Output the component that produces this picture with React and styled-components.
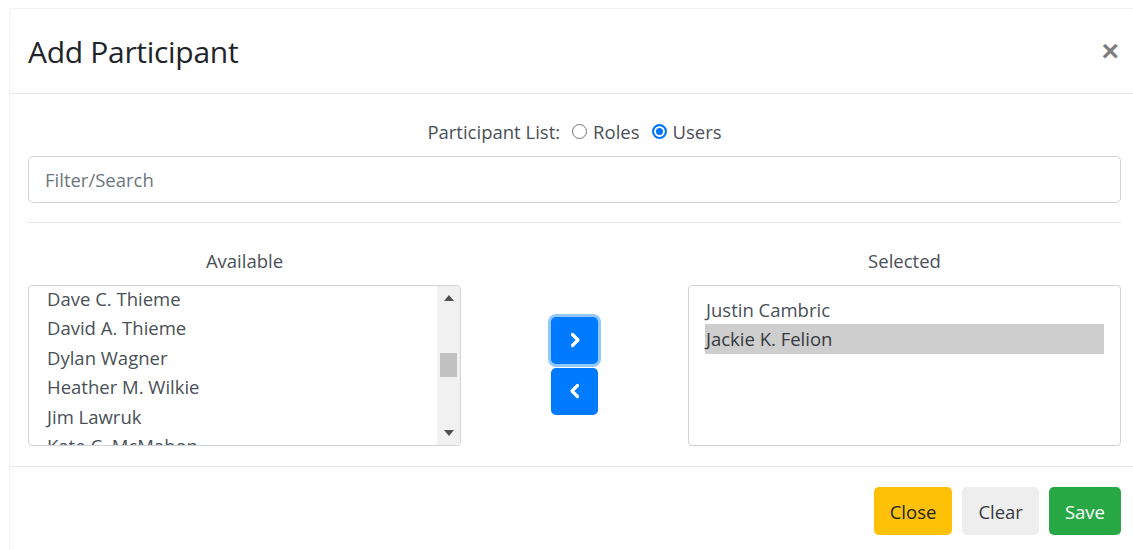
import React, { useState } from "react";
import styled, { createGlobalStyle } from "styled-components";

const GlobalStyle = createGlobalStyle`
    html, body {
        margin: 0;
        background: #fff;
        overflow: hidden;
    }
    body {
        font-family: "Open Sans", "Noto Sans", sans-serif;
        color: #495057;
    }
`

const Page = styled.div`
    padding: 8px 0 0 9px;
`
const Modal = styled.div`
    width: 1129px;
    border-left: 1px solid #f2f2f2;
    border-top: 1px solid #f2f2f2;
    border-top-left-radius: 4px;
    background: #fff;
`
const Header = styled.div`
    display: flex;
    align-items: center;
    justify-content: space-between;
    height: 84px;
    padding: 0 18px;
    border-bottom: 1px solid #e9ecef;
`
const Title = styled.h4`
    margin: 0;
    font-size: 30px;
    font-weight: 500;
    color: #212529;
    letter-spacing: -0.3px;
`
const CloseX = styled.button`
    border: 0;
    background: none;
    padding: 0;
    margin-right: 2px;
    font-family: "Liberation Sans", sans-serif;
    font-size: 30px;
    font-weight: 700;
    line-height: 1;
    color: #000;
    opacity: 0.5;
    cursor: pointer;
`
const Body = styled.div`
    padding: 24px 18px 20px;
`
const ListType = styled.div`
    display: flex;
    justify-content: center;
    align-items: center;
    gap: 6px;
    height: 26px;
    font-size: 18.5px;
    color: #495057;
`
const Option = styled.label`
    display: flex;
    align-items: center;
    gap: 6px;
    margin-left: 6px;
    cursor: pointer;
`
const Radio = styled.span`
    box-sizing: border-box;
    width: 15px;
    height: 15px;
    border-radius: 50%;
    border: ${p => p.$on ? "2px solid #0075ff" : "1px solid #767676"};
    background: ${p => p.$on ? "#0075ff" : "#fff"};
    box-shadow: ${p => p.$on ? "inset 0 0 0 2px #fff" : "none"};
`
const Search = styled.input`
    display: block;
    box-sizing: border-box;
    width: 100%;
    height: 47px;
    margin-top: 12px;
    padding: 0 16px;
    border: 1px solid #ced4da;
    border-radius: 5px;
    font-family: inherit;
    font-size: 18.5px;
    color: #495057;
    outline: none;
    &::placeholder {
        color: #6c757d;
    }
`
const Rule = styled.hr`
    margin: 19px 0 0;
    border: 0;
    border-top: 1px solid #e5e7ea;
`
const Columns = styled.div`
    display: grid;
    grid-template-columns: 433px 1fr 433px;
    grid-template-rows: auto 161px;
    row-gap: 11px;
    margin-top: 25px;
`
const ColLabel = styled.div`
    grid-row: 1;
    grid-column: ${p => p.$col};
    text-align: center;
    font-size: 18.5px;
    line-height: 26px;
    color: #495057;
`
const ListBox = styled.div`
    grid-row: 2;
    grid-column: ${p => p.$col};
    display: flex;
    box-sizing: border-box;
    border: 1px solid #ced4da;
    border-radius: 4px;
    overflow: hidden;
    background: #fff;
`
const Items = styled.div`
    flex: 1;
    overflow: hidden;
    padding: ${p => p.$pad};
`
const Item = styled.div`
    height: 29.4px;
    line-height: 29.4px;
    padding-left: 1px;
    font-size: 18.5px;
    white-space: nowrap;
    background: ${p => p.$picked ? "#cecece" : "transparent"};
    color: ${p => p.$picked ? "#343a40" : "#495057"};
`
const ScrollBar = styled.div`
    display: flex;
    flex-direction: column;
    width: 23px;
    background: #f1f1f1;
`
const ScrollArrow = styled.div`
    display: flex;
    align-items: center;
    justify-content: center;
    height: 24px;
`
const Track = styled.div`
    flex: 1;
    padding: 0 3px;
`
const Thumb = styled.div`
    height: 24px;
    background: #c1c1c1;
`
const Movers = styled.div`
    grid-row: 2;
    grid-column: 2;
    align-self: center;
    display: flex;
    flex-direction: column;
    align-items: center;
    gap: 4px;
`
const MoveBtn = styled.button`
    display: flex;
    align-items: center;
    justify-content: center;
    width: 47px;
    height: 47px;
    padding: 0;
    border: 0;
    border-radius: 5px;
    background: #007bff;
    box-shadow: ${p => p.$focus ? "0 0 0 3px rgba(38, 143, 255, 0.5)" : "none"};
    cursor: pointer;
`
const Footer = styled.div`
    display: flex;
    justify-content: flex-end;
    gap: 10px;
    padding: 20px 18px 20px;
    border-top: 1px solid #e9ecef;
`
const ActionBtn = styled.button`
    height: 48px;
    padding: 0 16px;
    border: 0;
    border-radius: 5px;
    font-family: inherit;
    font-size: 18.5px;
    background: ${p => p.$bg};
    color: ${p => p.$fg};
    cursor: pointer;
`

const Chevron = ({ left }) => (
    <svg width="16" height="16" viewBox="0 0 16 16">
        <polyline
            points={left ? "10.5,2.5 5,8 10.5,13.5" : "5.5,2.5 11,8 5.5,13.5"}
            fill="none"
            stroke="#fff"
            strokeWidth="3.2"
            strokeLinecap="round"
            strokeLinejoin="round"
        />
    </svg>
)

const Tri = ({ down }) => (
    <svg width="10" height="6" viewBox="0 0 10 6">
        <polygon points={down ? "0,0 10,0 5,6" : "0,6 10,6 5,0"} fill="#505050" />
    </svg>
)

const available = [
    "Alan Brooks",
    "Amanda Grey",
    "Brian Kowalski",
    "Carla J. Nunes",
    "Dave C. Thieme",
    "David A. Thieme",
    "Dylan Wagner",
    "Heather M. Wilkie",
    "Jim Lawruk",
    "Kate C. McMahon",
    "Laura Peters",
]
const scrolledBy = 4
const ROW = 29.4

const selected = ["Justin Cambric", "Jackie K. Felion"]

const App = () => {
    const [mode, setMode] = useState("users")

    return (
        <Page>
            <GlobalStyle />
            <Modal>
                <Header>
                    <Title>Add Participant</Title>
                    <CloseX>×</CloseX>
                </Header>
                <Body>
                    <ListType>
                        <span>Participant List:</span>
                        <Option onClick={() => setMode("roles")}>
                            <Radio $on={mode === "roles"} />
                            Roles
                        </Option>
                        <Option onClick={() => setMode("users")}>
                            <Radio $on={mode === "users"} />
                            Users
                        </Option>
                    </ListType>
                    <Search placeholder="Filter/Search" />
                    <Rule />
                    <Columns>
                        <ColLabel $col={1}>Available</ColLabel>
                        <ColLabel $col={3}>Selected</ColLabel>

                        <ListBox $col={1}>
                            <Items $pad="0 0 0 17px">
                                <div style={{ marginTop: -scrolledBy * ROW - 2 }}>
                                    {available.map(name => (
                                        <Item key={name}>{name}</Item>
                                    ))}
                                </div>
                            </Items>
                            <ScrollBar>
                                <ScrollArrow><Tri /></ScrollArrow>
                                <Track>
                                    <Thumb style={{ marginTop: 43 }} />
                                </Track>
                                <ScrollArrow><Tri down /></ScrollArrow>
                            </ScrollBar>
                        </ListBox>

                        <Movers>
                            <MoveBtn $focus><Chevron /></MoveBtn>
                            <MoveBtn><Chevron left /></MoveBtn>
                        </Movers>

                        <ListBox $col={3}>
                            <Items $pad="9px 16px 0">
                                {selected.map((name, i) => (
                                    <Item key={name} $picked={i === 1}>{name}</Item>
                                ))}
                            </Items>
                        </ListBox>
                    </Columns>
                </Body>
                <Footer>
                    <ActionBtn $bg="#ffc107" $fg="#212529">Close</ActionBtn>
                    <ActionBtn $bg="#eeeeee" $fg="#343a40">Clear</ActionBtn>
                    <ActionBtn $bg="#28a745" $fg="#fff">Save</ActionBtn>
                </Footer>
            </Modal>
        </Page>
    );
};

export default App;
